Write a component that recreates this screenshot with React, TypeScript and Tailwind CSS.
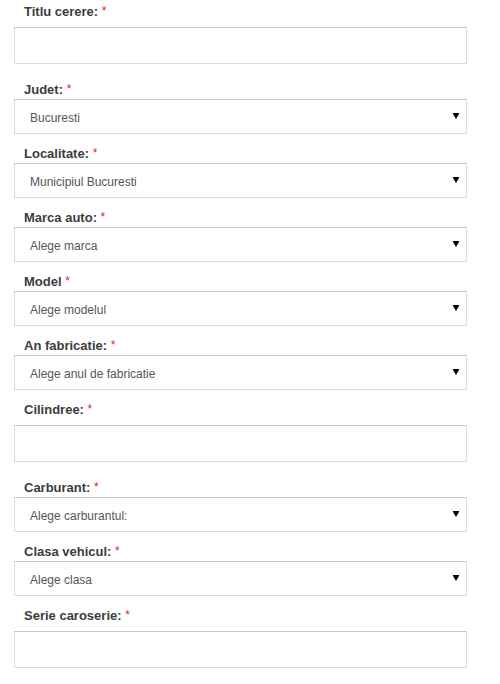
import React from "react";

function Label({ text }: { text: string }) {
  return (
    <div className="h-[20px] pl-[10px] leading-[22px] text-[13px] font-bold text-[#3c3c3c]">
      {text} <span className="text-[12px] font-normal text-[#e8202a] align-top relative top-[-1px]">*</span>
    </div>
  );
}

function TextField({ label }: { label: string }) {
  return (
    <div className="mb-[15px]">
      <Label text={label} />
      <div className="mt-[6px] h-[37px] border border-[#dcdcdc] border-t-[#c6c6c6] bg-white" />
    </div>
  );
}

function SelectField({ label, value }: { label: string; value: string }) {
  return (
    <div className="mb-[9px]">
      <Label text={label} />
      <div className="flex h-[35px] items-center justify-between border border-[#dcdcdc] border-t-[#c6c6c6] bg-white pl-[15px] pr-[6px]">
        <span className="mt-[3px] text-[12px] text-[#555]">{value}</span>
        <svg width="6" height="7" viewBox="0 0 6 7" className="mr-[1px]">
          <rect x="0" y="0" width="6" height="1" fill="#000" />
          <polygon points="0,1 6,1 3,6" fill="#000" />
        </svg>
      </div>
    </div>
  );
}

export default function App() {
  return (
    <div
      className="w-[500px] h-[684px] bg-white pl-[14px] pr-[33px] pt-[1px] overflow-hidden"
      style={{ fontFamily: '"Liberation Sans", Arial, sans-serif' }}
    >
      <TextField label="Titlu cerere:" />
      <SelectField label="Judet:" value="Bucuresti" />
      <SelectField label="Localitate:" value="Municipiul Bucuresti" />
      <SelectField label="Marca auto:" value="Alege marca" />
      <SelectField label="Model" value="Alege modelul" />
      <SelectField label="An fabricatie:" value="Alege anul de fabricatie" />
      <TextField label="Cilindree:" />
      <SelectField label="Carburant:" value="Alege carburantul:" />
      <SelectField label="Clasa vehicul:" value="Alege clasa" />
      <TextField label="Serie caroserie:" />
    </div>
  );
}
